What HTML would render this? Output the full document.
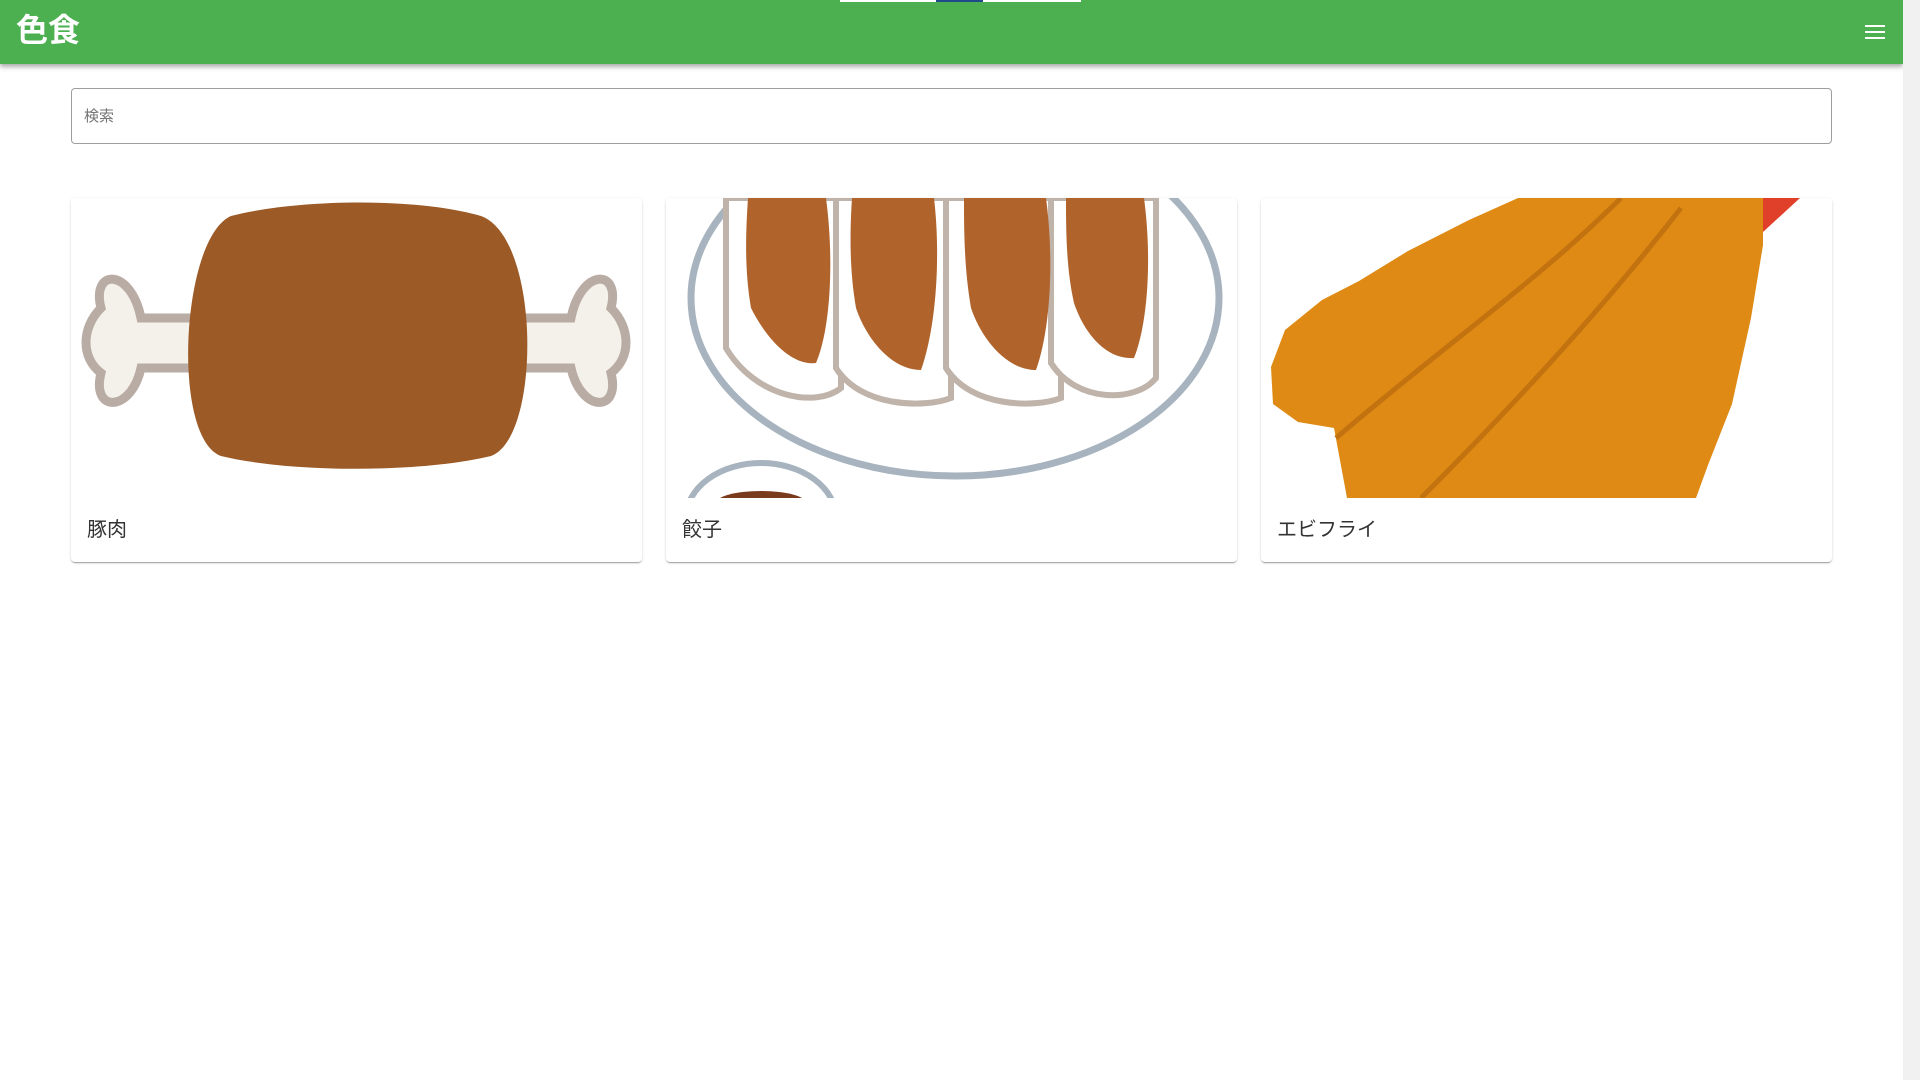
<!DOCTYPE html>
<html><head><meta charset="utf-8"><style>
*{box-sizing:border-box;margin:0;padding:0}
body{width:1920px;height:1080px;overflow:hidden;background:#fff;font-family:"Liberation Sans","Noto Sans CJK JP",sans-serif;position:relative}
.hdr{position:absolute;left:0;top:0;width:1903px;height:64px;background:#4caf50;box-shadow:0 2px 4px rgba(0,0,0,.25),0 4px 5px rgba(0,0,0,.12)}
.hdr h1{position:absolute;left:16px;top:10px;font-size:32px;color:#fff;font-weight:bold;line-height:40px}
.menu{position:absolute;left:1865px;top:25px;width:20px}
.menu i{display:block;height:2px;background:#fff;margin-bottom:4px}
.sb{position:absolute;left:1903px;top:0;width:17px;height:1080px;background:#f1f1f1}
.search{position:absolute;left:71px;top:88px;width:1761px;height:56px;border:1px solid #9e9e9e;border-radius:4px;font-size:15px;color:#757575;padding:16px 12px}
.card{position:absolute;top:198px;width:571px;height:364px;background:#fff;border-radius:4px;box-shadow:0 2px 1px -1px rgba(0,0,0,.2),0 1px 1px rgba(0,0,0,.14),0 1px 3px rgba(0,0,0,.12);overflow:hidden}
.card svg{display:block}
.card p{position:absolute;left:16px;top:315px;font-size:20px;color:#333}
.top{position:absolute;left:840px;top:0;width:241px;height:2px;background:#fff}
.top b{position:absolute;left:96px;top:0;width:47px;height:2px;background:#1e4a8a}
</style></head><body>
<div class="hdr"><h1>色食</h1><div class="menu"><i></i><i></i><i></i></div></div>
<div class="top"><b></b></div>
<div class="sb"></div>
<div class="search">検索</div>

<div class="card" style="left:71px">
<svg width="571" height="300">
<g fill="#f4f1ea" stroke="#b9aca4" stroke-width="9">
<path d="M130 120 L70 120 C60 70 20 70 30 110 C10 130 10 160 30 175 C20 215 60 215 70 170 L130 170 Z"/>
<path d="M440 120 L500 120 C510 70 550 70 540 110 C560 130 560 160 540 175 C550 215 510 215 500 170 L440 170 Z"/>
</g>
<path d="M160 18 C230 0 350 0 410 18 C470 40 470 240 420 258 C350 275 220 275 150 258 C100 240 110 40 160 18 Z" fill="#9c5a26"/>
</svg><p>豚肉</p></div>

<div class="card" style="left:666px">
<svg width="571" height="300">
<ellipse cx="289" cy="100" rx="264" ry="178" fill="#fff" stroke="#a7b3be" stroke-width="7"/>
<g fill="#fff" stroke="#bfb3aa" stroke-width="6">
<path d="M60 0 L175 0 L175 190 C150 210 90 200 60 150 Z"/>
<path d="M170 0 L285 0 L285 200 C260 210 195 210 170 170 Z"/>
<path d="M280 0 L395 0 L395 200 C370 210 305 210 280 170 Z"/>
<path d="M385 0 L490 0 L490 180 C470 205 410 205 385 165 Z"/>
</g>
<g fill="#b0642c">
<path d="M82 0 L160 0 C168 60 165 130 150 165 C125 168 100 140 85 110 C78 70 80 30 82 0Z"/>
<path d="M186 0 L268 0 C275 60 270 130 255 172 C225 172 200 140 190 110 C183 70 184 30 186 0Z"/>
<path d="M298 0 L380 0 C388 60 385 130 370 172 C340 172 315 140 305 110 C298 70 298 30 298 0Z"/>
<path d="M400 0 L478 0 C486 60 482 125 468 160 C440 162 418 135 408 105 C400 70 400 30 400 0Z"/>
</g>
<ellipse cx="95" cy="320" rx="75" ry="55" fill="#fff" stroke="#a7b3be" stroke-width="6"/>
<ellipse cx="95" cy="305" rx="45" ry="12" fill="#7a3a1c"/>
</svg><p>餃子</p></div>

<div class="card" style="left:1261px">
<svg width="571" height="300">
<path d="M471 0 L539 0 L502 34 L480 30 Z" fill="#e0402a"/>
<path d="M10 169 L24 132 L61 102 L98 83 L147 53 L208 22 L257 0 L502 0 L502 47 L490 120 L471 206 L447 267 L435 300 L86 300 L73 230 L37 224 L12 206 Z" fill="#de8a14"/>
<g fill="none" stroke="#c27310" stroke-width="5">
<path d="M75 240 C180 150 280 80 360 0"/><path d="M160 300 C260 200 350 100 420 10"/>
</g>
</svg><p>エビフライ</p></div>
</body></html>
